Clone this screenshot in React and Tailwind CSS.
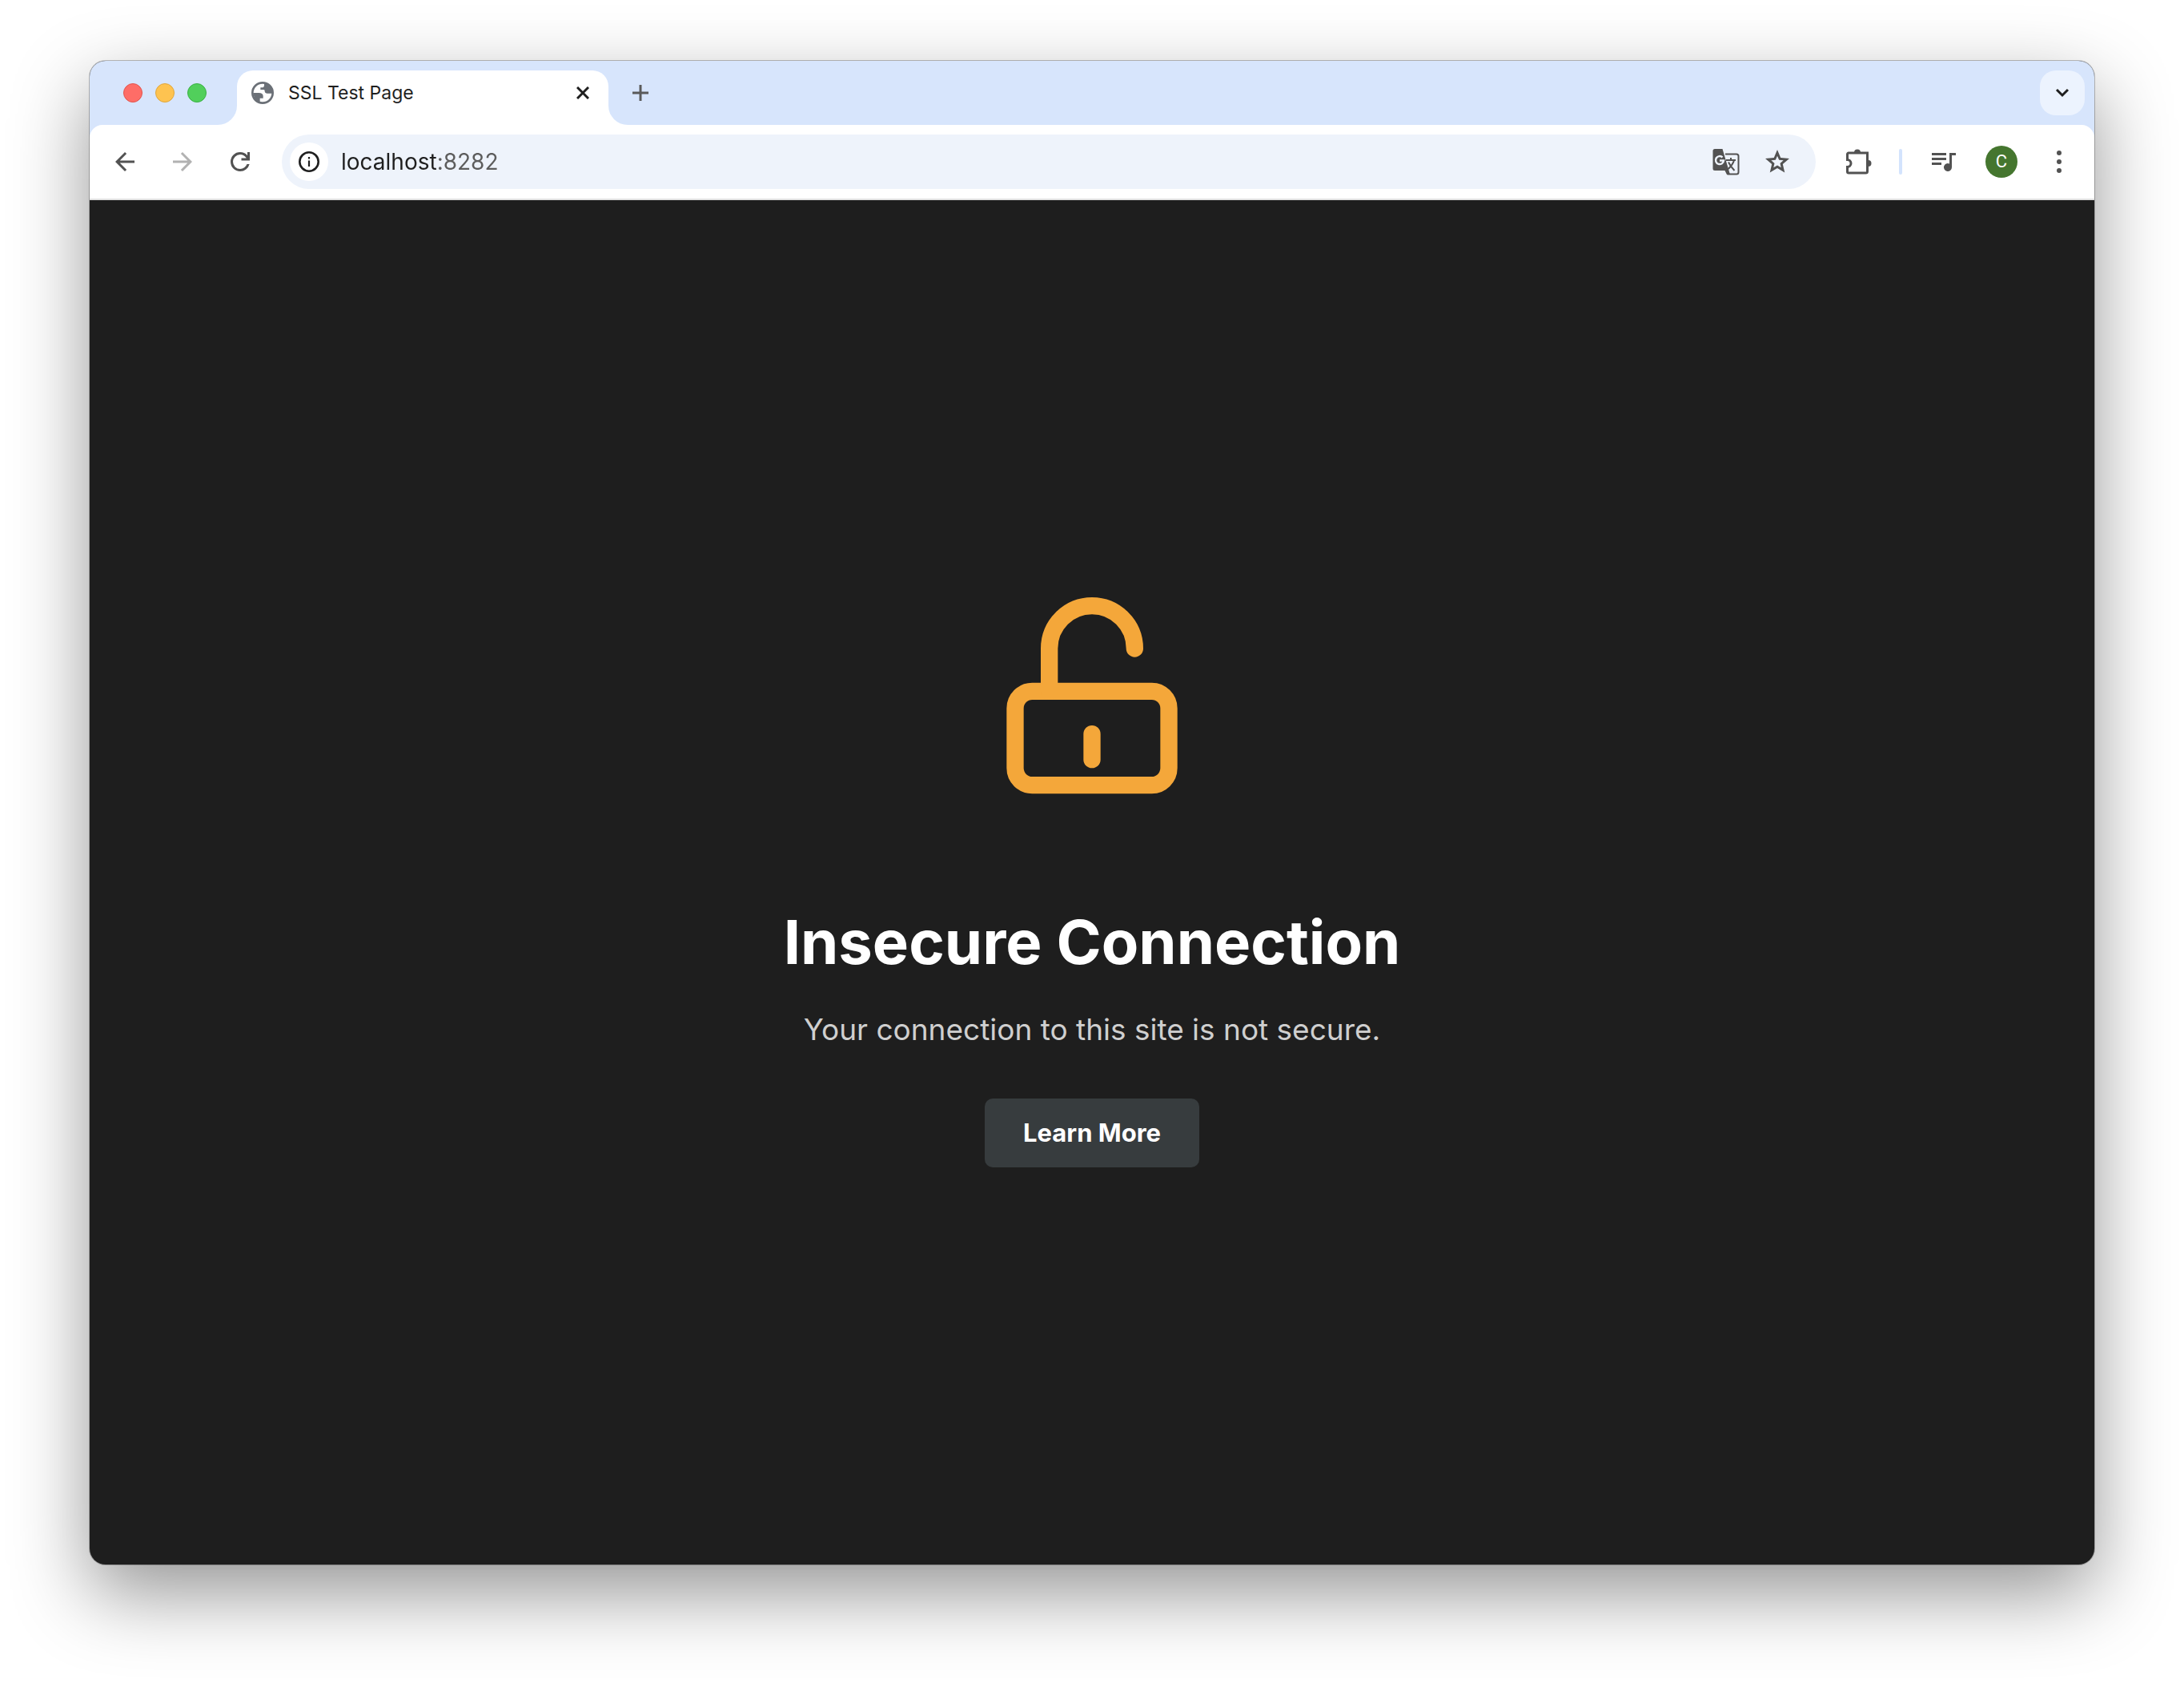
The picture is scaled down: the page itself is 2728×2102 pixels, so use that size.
function IconButton({ label, className = "", children, ...rest }) {
  return (
    <button
      type="button"
      aria-label={label}
      className={`flex size-14 shrink-0 items-center justify-center rounded-full ${className}`}
      {...rest}
    >
      {children}
    </button>
  );
}

function Symbol({ d, className = "size-9" }) {
  return (
    <svg viewBox="0 -960 960 960" fill="currentColor" className={className} aria-hidden="true">
      <path d={d} />
    </svg>
  );
}

function Globe() {
  return (
    <svg viewBox="0 0 84 84" className="size-7 shrink-0" aria-hidden="true">
      <circle cx="42" cy="42" r="38" fill="#fff" stroke="#6b7077" strokeWidth="8" />
      <path
        fill="#6b7077"
        d="M48 6V14C48 19 44 22 40 22H34V30H46C50 30 50 34 50 36C50 41 54 44 60 44H78L80 30L66 12ZM6 42H28C38 42 44 46 44 54V62H32V78L14 68Z"
      />
    </svg>
  );
}

function TranslateIcon() {
  return (
    <svg viewBox="0 0 34 34" className="size-[34px]" aria-hidden="true">
      <path d="M16 7.500H30a2.500 2.500 0 0 1 2.500 2.500V30a2.500 2.500 0 0 1-2.500 2.500H18.500" fill="none" stroke="currentColor" strokeWidth="2" />
      <path d="M3 1H12.500L22 33H18L15.500 28H3a2.500 2.500 0 0 1-2.500-2.500V3.500A2.500 2.500 0 0 1 3 1Z" fill="currentColor" />
      <path d="M17 15H29M23 12V15M27 15C26 20 22 24 18.500 27M20 17.500C22 22 25 25.500 27.500 28" fill="none" stroke="currentColor" strokeWidth="2" />
      <path d="M12.500 11.500A5 5 0 1 0 14 15.500H9" fill="none" stroke="#eef3fb" strokeWidth="2.500" />
    </svg>
  );
}

function TabStrip() {
  return (
    <div className="flex h-20 items-start bg-[#d7e5fc] pt-3 pr-3 pl-[42px]">
      <div className="mr-3.5 flex h-14 items-center gap-4">
        <button type="button" aria-label="Close window" className="size-6 rounded-full border border-[#e2544d] bg-[#fe6d67]" />
        <button type="button" aria-label="Minimize window" className="size-6 rounded-full border border-[#e0a63a] bg-[#fec350]" />
        <button type="button" aria-label="Zoom window" className="size-6 rounded-full border border-[#3bb044] bg-[#51cf5b]" />
      </div>
      <div className="size-6 self-end bg-white">
        <div className="size-6 rounded-br-[24px] bg-[#d7e5fc]" />
      </div>
      <div className="flex h-17 w-[464px] items-center rounded-t-[20px] bg-white pr-4 pb-3 pl-[18px]">
        <Globe />
        <span className="ml-[18px] flex-1 text-[23px] leading-8 text-[#1f1f1f]">SSL Test Page</span>
        <button type="button" aria-label="Close tab" className="flex size-8 items-center justify-center text-[#1f1f1f]">
          <svg viewBox="0 0 16 16" className="size-4" aria-hidden="true">
            <path d="M1 1L15 15M15 1L1 15" stroke="currentColor" strokeWidth="3" />
          </svg>
        </button>
      </div>
      <div className="size-6 self-end bg-white">
        <div className="size-6 rounded-bl-[24px] bg-[#d7e5fc]" />
      </div>
      <button type="button" aria-label="New tab" className="flex h-14 w-8 items-center justify-center text-[#5a5a5a]">
        <svg viewBox="0 0 20 20" className="size-5" aria-hidden="true">
          <path d="M10 0V20M0 10H20" stroke="currentColor" strokeWidth="3" />
        </svg>
      </button>
      <button type="button" aria-label="Search tabs" className="ml-auto flex size-14 items-center justify-center rounded-[20px] bg-[#ecf3fe] text-[#1f1f1f]">
        <svg viewBox="0 0 18 12" className="h-3 w-[18px]" fill="none" aria-hidden="true">
          <path d="M2 2L9 9L16 2" stroke="currentColor" strokeWidth="3" />
        </svg>
      </button>
    </div>
  );
}

function Toolbar() {
  return (
    <div className="bg-[#d7e5fc]">
      <div className="flex h-[94px] items-center rounded-t-2xl border-b-2 border-[#e0e0e0] bg-white px-4 text-[#525252]">
        <div className="flex gap-4">
          <IconButton label="Back">
            <Symbol d="m313-440 224 224-57 56-320-320 320-320 57 56-224 224h487v80H313Z" />
          </IconButton>
          <IconButton label="Forward" disabled className="text-[#b2b2b2]">
            <Symbol d="M647-440H160v-80h487L423-744l57-56 320 320-320 320-57-56 224-224Z" />
          </IconButton>
          <IconButton label="Reload">
            <Symbol d="M480-160q-134 0-227-93t-93-227q0-134 93-227t227-93q69 0 132 28.500T720-690v-110h80v280H520v-80h168q-32-56-87.500-88T480-720q-100 0-170 70t-70 170q0 100 70 170t170 70q77 0 139-44t87-116h84q-28 106-114 173t-196 67Z" />
          </IconButton>
        </div>
        <div className="ml-6 flex h-17 flex-1 items-center rounded-full bg-[#eef3fb] pr-5 pl-2.5">
          <button type="button" aria-label="View site information" className="flex size-12 items-center justify-center rounded-full bg-white text-[#1f1f1f]">
            <svg viewBox="0 0 26 26" className="size-[26px]" aria-hidden="true">
              <circle cx="13" cy="13" r="11.700" fill="none" stroke="currentColor" strokeWidth="2.600" />
              <path d="M11.900 11.500h2.200v7.500h-2.200zM11.900 7h2.200v2.400h-2.200z" fill="currentColor" />
            </svg>
          </button>
          <input
            type="text"
            aria-label="Address"
            defaultValue="localhost:8282"
            className="ml-4 h-12 min-w-0 flex-1 bg-[linear-gradient(to_right,#1f1f1f_119px,#5c5c5c_119px)] bg-clip-text text-[28px] text-transparent outline-none"
          />
          <div className="flex gap-2">
            <IconButton label="Translate this page">
              <TranslateIcon />
            </IconButton>
            <IconButton label="Bookmark this tab">
              <Symbol d="m354-287 126-76 126 77-33-144 111-96-146-13-58-136-58 135-146 13 111 97-33 143ZM233-120l65-281L80-590l288-25 112-265 112 265 288 25-218 189 65 281-247-149-247 149Z" />
            </IconButton>
          </div>
        </div>
        <IconButton label="Extensions" className="ml-[26px]">
          <svg viewBox="0 0 32 32" className="size-8" aria-hidden="true">
            <path
              d="M3 5H26.500V28a2 2 0 0 1-2 2H3a1.500 1.500 0 0 1-1.500-1.500V22.500A4.500 4.500 0 0 0 1.500 13.500V6.500A1.500 1.500 0 0 1 3 5Z"
              fill="none"
              stroke="currentColor"
              strokeWidth="3"
            />
            <path d="M10 4.500a4 4 0 0 1 8 0ZM27.500 14a4 4 0 0 1 0 8Z" fill="currentColor" />
          </svg>
        </IconButton>
        <div className="ml-[22px] h-8 w-1 rounded-full bg-[#d3e3fd]" />
        <IconButton label="Control your music" className="ml-6">
          <svg viewBox="0 0 30 23" className="h-[23px] w-[30px]" fill="currentColor" aria-hidden="true">
            <path d="M0 0h18v3H0zM0 6h18v3H0zM0 12h12v3H0zM22 0h8v3h-5v15a5 5 0 1 1-3-4.600Z" />
          </svg>
        </IconButton>
        <button type="button" aria-label="Profile" className="ml-6 flex size-10 items-center justify-center rounded-full bg-[#45762f] font-[Roboto] text-[22px] leading-6 text-white">
          C
        </button>
        <IconButton label="Menu" className="ml-6">
          <svg viewBox="0 0 6 28" className="h-7 w-1.5" fill="currentColor" aria-hidden="true">
            <circle cx="3" cy="3" r="3" />
            <circle cx="3" cy="14" r="3" />
            <circle cx="3" cy="25" r="3" />
          </svg>
        </IconButton>
      </div>
    </div>
  );
}

function UnlockedPadlock() {
  return (
    <svg
      viewBox="0 0 24 24"
      className="size-64"
      fill="none"
      stroke="#f4a73a"
      strokeWidth="2"
      strokeLinecap="round"
      role="img"
      aria-label="Open padlock"
    >
      <rect x="3" y="11" width="18" height="11" rx="2" />
      <path d="M7 11V6a5 5 0 0 1 10 0" />
      <path d="M12 16v3" />
    </svg>
  );
}

export default function App() {
  return (
    <div className="flex min-h-screen bg-white px-28 pt-[76px] pb-[148px] font-[Inter,sans-serif]">
      <div className="flex flex-1 flex-col overflow-hidden rounded-[20px] bg-[#1e1e1e] shadow-[0_0_0_1px_rgba(0,0,0,0.25),0_36px_96px_rgba(0,0,0,0.42)]">
        <TabStrip />
        <Toolbar />
        <main className="flex flex-1 flex-col items-center justify-center">
          <UnlockedPadlock />
          <h1 className="mt-[126px] text-[76px] leading-24 font-bold text-white">Insecure Connection</h1>
          <p className="mt-[38px] text-[37px] leading-12 text-[#cfcfcf]">Your connection to this site is not secure.</p>
          <button type="button" className="mt-[62px] h-[86px] rounded-[10px] bg-[#373c3e] px-12 text-[31px] font-bold text-white">
            Learn More
          </button>
        </main>
      </div>
    </div>
  );
}
